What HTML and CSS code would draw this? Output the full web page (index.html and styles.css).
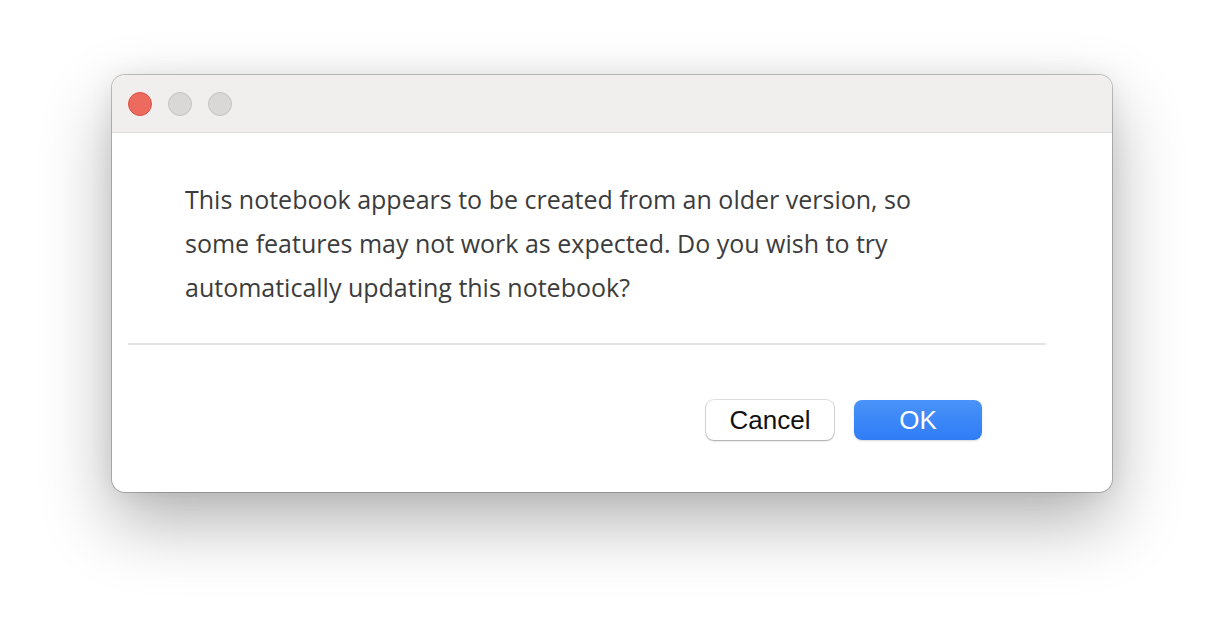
FILE: index.html
```html
<!DOCTYPE html>
<html>
<head>
<meta charset="utf-8">
<link rel="stylesheet" href="styles.css">
</head>
<body>
<div class="stage">
  <div class="window">
    <div class="titlebar">
      <span class="light red"></span>
      <span class="light gray"></span>
      <span class="light gray"></span>
    </div>
    <div class="content">
      <p class="message">This notebook appears to be created from an older version, so<br>some features may not work as expected. Do you wish to try<br>automatically updating this notebook?</p>
      <div class="divider"></div>
      <div class="actions">
        <button class="btn cancel">Cancel</button>
        <button class="btn ok">OK</button>
      </div>
    </div>
  </div>
</div>
</body>
</html>
```
FILE: styles.css
```css
html, body {
  margin: 0;
  padding: 0;
  background: #ffffff;
}
.stage {
  width: 1224px;
  height: 640px;
  padding-top: 75px;
  padding-left: 112px;
  box-sizing: border-box;
}
.window {
  width: 1000px;
  height: 417px;
  border-radius: 13px;
  background: #ffffff;
  box-shadow: 0 0 0 1px rgba(0,0,0,0.22), 0 30px 70px rgba(0,0,0,0.30), 0 0 24px rgba(0,0,0,0.07);
  overflow: hidden;
  display: flex;
  flex-direction: column;
}
.titlebar {
  height: 57px;
  background: #f0efee;
  border-bottom: 1px solid #dcdcdc;
  display: flex;
  align-items: center;
  gap: 16px;
  padding-left: 16px;
  flex-shrink: 0;
}
.light {
  width: 24px;
  height: 24px;
  border-radius: 50%;
  box-sizing: border-box;
}
.red {
  background: #ed6a5e;
  border: 1px solid #d85446;
}
.gray {
  background: #d9d8d7;
  border: 1px solid #c4c3c2;
}
.content {
  display: flex;
  flex-direction: column;
  padding: 0 66px 0 16px;
}
.message {
  margin: 44px 0 0 57px;
  font-family: "Open Sans", "Noto Sans", sans-serif;
  font-size: 25px;
  line-height: 44px;
  color: #3c3c3c;
  white-space: nowrap;
}
.divider {
  height: 2px;
  background: #e3e3e3;
  margin-top: 34px;
}
.actions {
  display: flex;
  justify-content: flex-end;
  gap: 20px;
  margin-top: 55px;
  padding-right: 64px;
}
.btn {
  width: 128px;
  height: 40px;
  border-radius: 8px;
  font-family: "Liberation Sans", Arial, sans-serif;
  font-size: 26px;
  border: none;
  padding: 0;
}
.cancel {
  background: #ffffff;
  color: #111;
  box-shadow: 0 0 0 1px rgba(0,0,0,0.12), 0 1px 2px rgba(0,0,0,0.25);
}
.ok {
  background: linear-gradient(#4a93f9, #2f7cf6);
  color: #ffffff;
  box-shadow: 0 1px 2px rgba(0,0,0,0.15);
}
```
